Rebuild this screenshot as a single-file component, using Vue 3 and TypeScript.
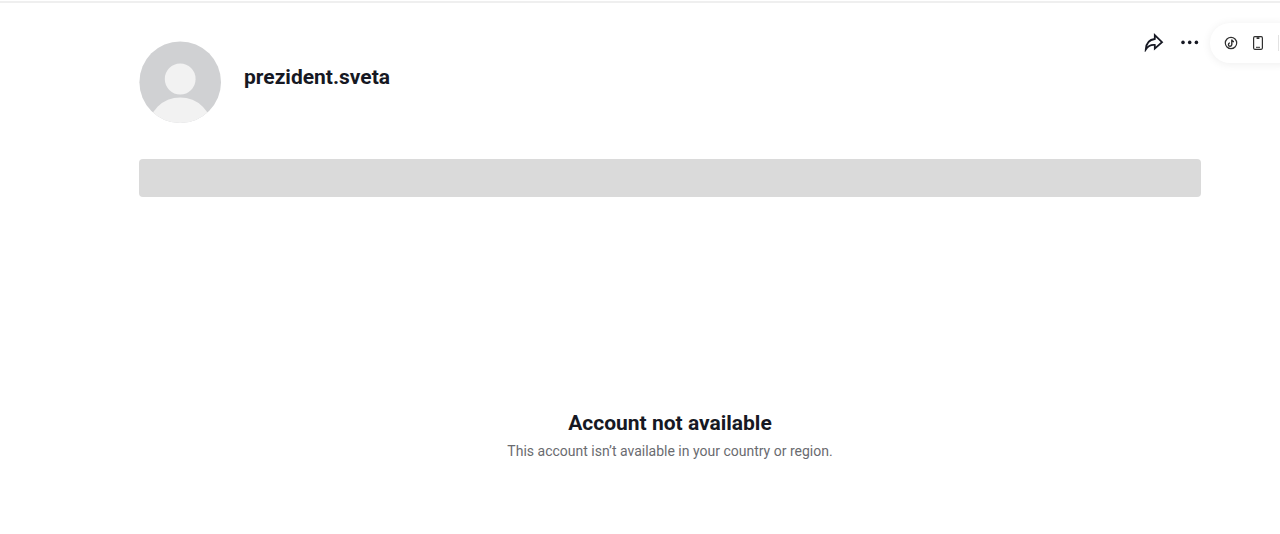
<script setup lang="ts">
const username: string = 'prezident.sveta'
const title: string = 'Account not available'
const message: string = 'This account isn’t available in your country or region.'
</script>

<template>
  <div class="page">
    <main class="profile">
      <header class="head">
        <svg class="avatar" viewBox="0 0 82 82" role="img" aria-label="Profile picture">
          <defs>
            <clipPath id="avatar-clip"><circle cx="41.2" cy="41.2" r="40.8" /></clipPath>
          </defs>
          <g clip-path="url(#avatar-clip)">
            <rect width="82" height="82" fill="#d0d1d3" />
            <circle cx="41.2" cy="38" r="15.4" fill="#f2f2f2" />
            <circle cx="41.2" cy="88.4" r="32" fill="#f2f2f2" />
          </g>
        </svg>
        <h1 class="name">{{ username }}</h1>
        <div class="actions">
          <button type="button" class="icon-button" aria-label="Share">
            <svg width="20" height="20" viewBox="0 0 20 20" fill="none" stroke="#161823" stroke-width="1.8" stroke-linejoin="miter">
              <path d="M10.8 3.2 L18 10.2 L10.8 16.6 V13 C6.8 12.6 4.2 13.8 1.8 17.4 C2.2 11.6 5.2 7.6 10.8 7 Z" />
            </svg>
          </button>
          <button type="button" class="icon-button" aria-label="More">
            <svg width="20" height="20" viewBox="0 0 20 20" fill="#161823">
              <circle cx="3" cy="10.4" r="1.8" />
              <circle cx="9.7" cy="10.4" r="1.8" />
              <circle cx="16.4" cy="10.4" r="1.8" />
            </svg>
          </button>
        </div>
      </header>
      <div class="bar"></div>
      <section class="notice">
        <h2 class="title">{{ title }}</h2>
        <p class="message">{{ message }}</p>
      </section>
    </main>
    <aside class="dock">
      <button type="button" class="dock-button" aria-label="Get coins">
        <svg width="14" height="14" viewBox="0 0 14 14" fill="none" stroke="#303030">
          <circle cx="7" cy="7" r="5.7" stroke-width="1.2" />
          <path d="M7.8 3.5 V8.6 A1.7 1.7 0 1 1 6 6.9 M7.8 3.7 C8 5.1 8.8 5.7 10 5.8" stroke-width="1.4" />
        </svg>
      </button>
      <button type="button" class="dock-button" aria-label="Get app">
        <svg width="14" height="14" viewBox="0 0 14 14" fill="none" stroke="#303030" stroke-width="1.2">
          <rect x="2.6" y="0.7" width="8.8" height="12.6" rx="1.2" />
          <path d="M5.6 2.1 H8.4" stroke-width="1.8" />
          <path d="M5 11.3 H9" stroke-width="1" />
        </svg>
      </button>
      <span class="divider"></span>
    </aside>
  </div>
</template>

<style>
body {
  margin: 0;
  background: #fff;
}
</style>

<style scoped>
.page {
  position: relative;
  box-sizing: border-box;
  min-height: 100vh;
  padding-top: 1px;
  overflow: hidden;
  background: #fff;
  color: #161823;
  font-family: Roboto, "Liberation Sans", sans-serif;
}
.profile {
  border-top: 2px solid #efefef;
  padding: 38px 79px 0 139px;
}
.head {
  display: flex;
  align-items: flex-start;
}
.avatar {
  width: 82px;
  height: 82px;
  flex: none;
}
.name {
  margin: 22px 0 0 23px;
  font-size: 21px;
  line-height: 28px;
  font-weight: 700;
}
.actions {
  display: flex;
  gap: 16px;
  margin: -9px 1px 0 auto;
}
.icon-button,
.dock-button {
  display: block;
  padding: 0;
  border: 0;
  background: none;
  cursor: pointer;
}
.icon-button svg,
.dock-button svg {
  display: block;
}
.bar {
  height: 38px;
  margin-top: 36px;
  border-radius: 4px;
  background: #dadada;
}
.notice {
  margin-top: 212px;
  text-align: center;
}
.title {
  margin: 0;
  font-size: 21px;
  line-height: 28px;
  font-weight: 700;
}
.message {
  margin: 4px 0 0;
  font-size: 14px;
  line-height: 20px;
  color: #6a6b70;
}
.dock {
  position: absolute;
  top: 23px;
  right: -20px;
  display: flex;
  align-items: center;
  box-sizing: border-box;
  width: 90px;
  height: 40px;
  padding-left: 14px;
  gap: 13px;
  border-radius: 20px;
  background: #fff;
  box-shadow: 0 1px 10px rgba(0, 0, 0, 0.07);
}
.divider {
  width: 1px;
  height: 16px;
  background: #e2e2e2;
}
</style>
